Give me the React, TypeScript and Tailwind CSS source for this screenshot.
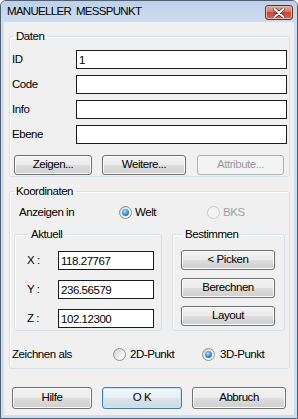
import React from 'react';

function Btn({
  children,
  className = '',
  disabled = false,
  primary = false,
}: {
  children: React.ReactNode;
  className?: string;
  disabled?: boolean;
  primary?: boolean;
}) {
  const look = disabled
    ? 'border-[#adb2b5] bg-[#f4f4f4] text-[#9a9a9a]'
    : primary
      ? 'border-[#3c7fb1] bg-[linear-gradient(#f2f6f9,#e9eff4_50%,#dbe3ea_50%,#cfd9e1)] shadow-[inset_0_0_0_1px_#c4e6f8] text-black'
      : 'border-[#707070] bg-[linear-gradient(#f2f2f2,#ebebeb_50%,#dddddd_50%,#cfcfcf)] shadow-[inset_0_0_0_1px_#fbfbfb] text-black';
  return (
    <div className={`flex items-center justify-center rounded-[3px] border ${look} ${className}`}>
      {children}
    </div>
  );
}

function Radio({ checked = false, disabled = false }: { checked?: boolean; disabled?: boolean }) {
  return (
    <span
      className={`flex h-[13px] w-[13px] shrink-0 items-center justify-center rounded-full border ${
        disabled
          ? 'border-[#c8c8c8] bg-[#f4f4f4]'
          : 'border-[#8e8f8f] bg-[linear-gradient(135deg,#cfcfcf,#f6f6f6_70%,#ffffff)]'
      }`}
    >
      {checked && (
        <span className="h-[7px] w-[7px] rounded-full bg-[radial-gradient(circle_at_40%_35%,#a6e0fb,#2a84c6_60%,#0d4f8a)]" />
      )}
    </span>
  );
}

function Field({ value = '', className = '' }: { value?: string; className?: string }) {
  return (
    <input
      readOnly
      defaultValue={value}
      className={`h-[19px] border border-[#1b1b1b] bg-white pl-[2px] text-black outline-none ${className}`}
    />
  );
}

function Group({
  title,
  className = '',
  children,
}: {
  title: string;
  className?: string;
  children: React.ReactNode;
}) {
  return (
    <fieldset className={`rounded-[3px] border border-[#d5dfe5] shadow-[inset_1px_1px_0_#ffffff] ${className}`}>
      <legend className="ml-[1px] px-[3px] leading-[14px]">{title}</legend>
      {children}
    </fieldset>
  );
}

export default function App() {
  return (
    <div className="h-[419px] w-[298px] font-['Liberation_Sans',Arial,sans-serif] text-[11.5px] tracking-[-0.45px] text-black">
      <div className="flex h-full w-full flex-col rounded-t-[6px] border border-[#505f72] bg-[#cddcee]">
        {/* title bar */}
        <div className="relative flex h-[21px] items-center rounded-t-[5px] bg-[linear-gradient(#bcd0e8,#c8d9ec_60%,#cddcee)] pl-[6px]">
          <span className="whitespace-pre text-[11.5px] leading-none tracking-[-0.7px]">MANUELLER  MESSPUNKT</span>
          <div className="absolute right-[4px] top-[4px] flex h-[15px] w-[28px] items-center justify-center rounded-[3px] border border-[#6b2b22] bg-[linear-gradient(#e9aa9e,#d6786a_45%,#c04836_50%,#d36a58)] shadow-[inset_0_0_0_1px_#eeb6ab]">
            <svg width="12" height="10" viewBox="0 0 12 10">
              <path
                d="M1.5 1 L10.5 9 M10.5 1 L1.5 9"
                stroke="#5a1f18"
                strokeWidth="3.4"
                strokeLinecap="round"
              />
              <path d="M1.5 1 L10.5 9 M10.5 1 L1.5 9" stroke="#ffffff" strokeWidth="2" strokeLinecap="round" />
            </svg>
          </div>
        </div>

        {/* client area */}
        <div className="mx-[3px] mb-[3px] flex flex-1 flex-col bg-[#f0f0f0]">
          <Group title="Daten" className="ml-[5px] mr-[4px] mt-[7px] px-[2px]">
            <div className="mt-[7px] flex flex-col gap-[6px]">
              {[
                ['ID', '1'],
                ['Code', ''],
                ['Info', ''],
                ['Ebene', ''],
              ].map(([label, value]) => (
                <div key={label} className="flex items-center">
                  <span className="w-[64px]">{label}</span>
                  <Field value={value} className="w-[211px]" />
                </div>
              ))}
            </div>
            <div className="mt-[11px] mb-[1px] flex pl-[2px]">
              <Btn className="h-[20px] w-[78px]">Zeigen...</Btn>
              <Btn className="ml-[10px] h-[20px] w-[84px]">Weitere...</Btn>
              <Btn disabled className="ml-[11px] h-[20px] w-[87px]">
                Attribute...
              </Btn>
            </div>
          </Group>

          <Group title="Koordinaten" className="ml-[5px] mr-[4px] mt-[7px] px-[2px]">
            <div className="mt-[8px] flex h-[13px] items-center pl-[7px]">
              <span className="w-[100px]">Anzeigen in</span>
              <div className="flex w-[88px] items-center gap-[3px]">
                <Radio checked />
                <span>Welt</span>
              </div>
              <div className="flex items-center gap-[3px] text-[#a0a0a0]">
                <Radio disabled />
                <span>BKS</span>
              </div>
            </div>

            <div className="mt-[8px] flex pl-[2px]">
              <Group title="Aktuell" className="w-[148px] pb-[2px] pl-[12px]">
                <div className="mt-[10px] flex flex-col gap-[10px]">
                  {[
                    ['X :', '118.27767'],
                    ['Y :', '236.56579'],
                    ['Z :', '102.12300'],
                  ].map(([label, value]) => (
                    <div key={label} className="flex items-center">
                      <span className="w-[31px]">{label}</span>
                      <Field value={value} className="w-[96px]" />
                    </div>
                  ))}
                </div>
              </Group>
              <Group title="Bestimmen" className="ml-[10px] w-[113px] pl-[8px]">
                <div className="mt-[9px] flex flex-col gap-[8px]">
                  <Btn className="h-[20px] w-[94px]">&lt; Picken</Btn>
                  <Btn className="h-[20px] w-[94px]">Berechnen</Btn>
                  <Btn className="h-[20px] w-[94px]">Layout</Btn>
                </div>
              </Group>
            </div>

            <div className="mb-[7px] mt-[17px] flex h-[13px] items-center">
              <span className="w-[101px]">Zeichnen als</span>
              <div className="flex w-[89px] items-center gap-[4px]">
                <Radio />
                <span>2D-Punkt</span>
              </div>
              <div className="flex items-center gap-[5px]">
                <Radio checked />
                <span>3D-Punkt</span>
              </div>
            </div>
          </Group>

          <div className="mt-[18px] flex pl-[8px]">
            <Btn className="h-[22px] w-[80px]">Hilfe</Btn>
            <Btn primary className="ml-[10px] h-[22px] w-[80px]">
              O K
            </Btn>
            <Btn className="ml-[10px] h-[22px] w-[94px]">Abbruch</Btn>
          </div>
        </div>
      </div>
    </div>
  );
}
